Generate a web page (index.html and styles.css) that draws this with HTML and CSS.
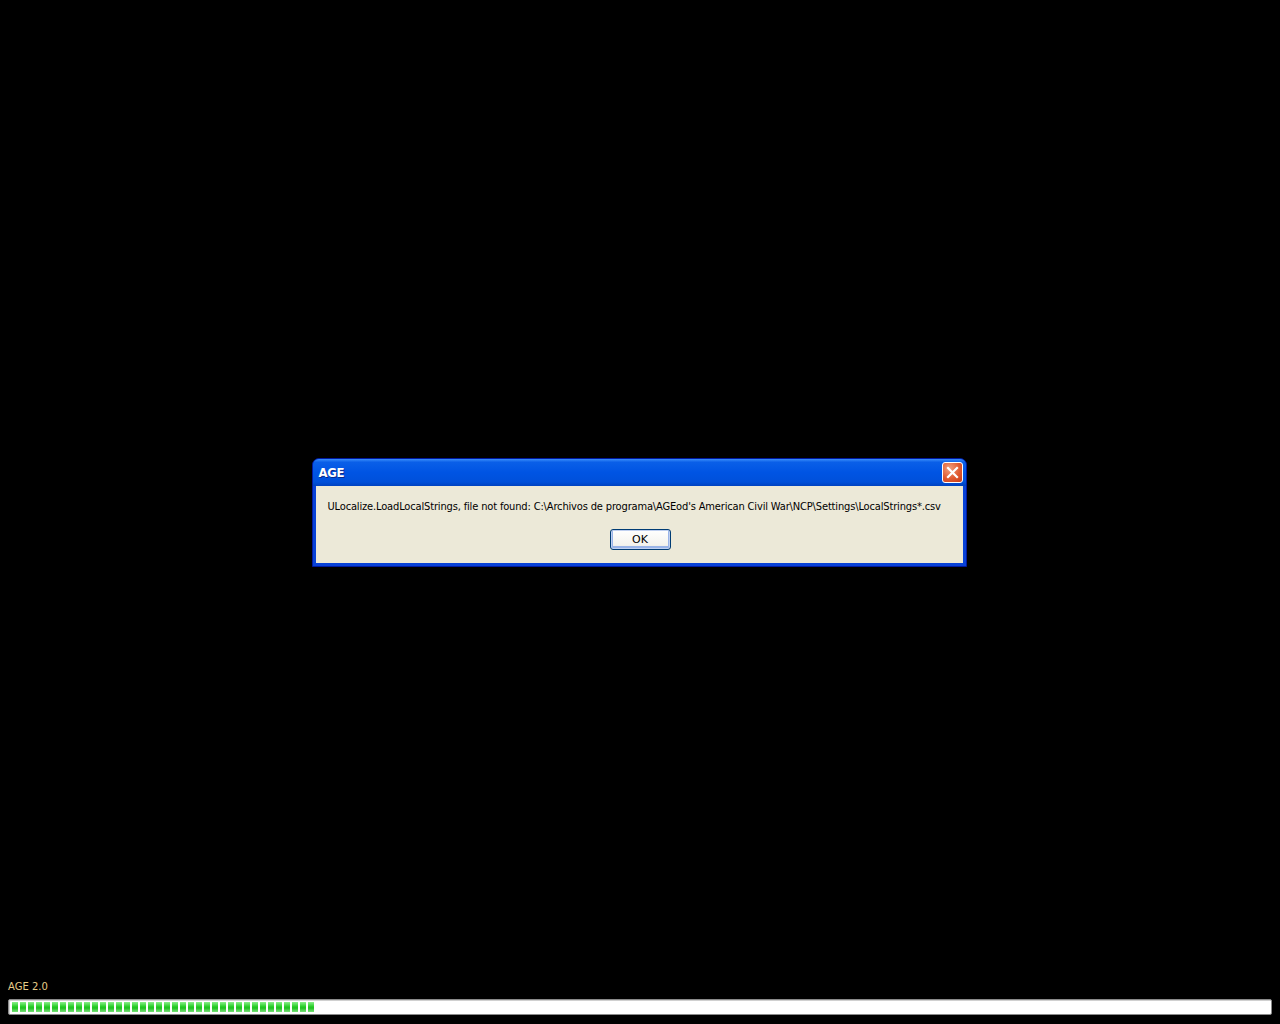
FILE: index.html
```html
<!DOCTYPE html>
<html>
<head>
<meta charset="utf-8">
<link rel="stylesheet" href="styles.css">
</head>
<body>
<div class="screen">
  <div class="stage">
    <div class="dialog">
      <div class="titlebar">
        <span class="title">AGE</span>
        <span class="close">
          <svg width="13" height="13" viewBox="0 0 13 13"><path d="M2 2 L11 11 M11 2 L2 11" stroke="#fff" stroke-width="2.2" stroke-linecap="square"/></svg>
        </span>
      </div>
      <div class="body">
        <p class="message">ULocalize.LoadLocalStrings, file not found: C:\Archivos de programa\AGEod's American Civil War\NCP\Settings\LocalStrings*.csv</p>
        <div class="actions"><button class="btn">OK</button></div>
      </div>
    </div>
  </div>
  <div class="status">
    <div class="version">AGE 2.0</div>
    <div class="progress" id="progress"></div>
  </div>
</div>
<script>
  var p = document.getElementById('progress');
  for (var i = 0; i < 38; i++) { var b = document.createElement('span'); b.className = 'block'; p.appendChild(b); }
</script>
</body>
</html>
```

FILE: styles.css
```css
html, body { margin: 0; padding: 0; background: #000; }
.screen { width: 1280px; height: 1024px; display: flex; flex-direction: column; }
.stage { flex: 1; display: flex; justify-content: center; align-items: flex-start; padding-top: 458px; }
.dialog {
  width: 655px; box-sizing: border-box; margin-left: -2px;
  background: #0842d8; border-radius: 7px 7px 0 0;
  padding: 0 3px 3px 3px;
  border: 1px solid #0019a0;
}
.titlebar {
  height: 27px; display: flex; align-items: center; justify-content: space-between;
  background: linear-gradient(#3a8cfa 0%, #0a5fe8 12%, #0054e3 50%, #0050da 85%, #0042c0 100%);
  margin: 0 -3px; padding: 0 3px 0 6px; border-radius: 6px 6px 0 0;
}
.title { font-family: "DejaVu Sans Condensed", "DejaVu Sans", sans-serif; font-weight: bold; font-size: 13px; color: #fff; letter-spacing: -0.3px; text-shadow: 1px 1px 0 #0a2a8a; }
.close {
  width: 21px; height: 21px; box-sizing: border-box; border: 1px solid #fff; border-radius: 3px;
  background: radial-gradient(circle at 35% 30%, #f0a080, #e05a30 55%, #c83a18);
  display: flex; align-items: center; justify-content: center;
}
.body { background: #ece9d8; padding: 14px 12px 13px 12px; }
.message { margin: 0; font-family: "DejaVu Sans Condensed", "DejaVu Sans", sans-serif; font-size: 11px; color: #000; white-space: nowrap; letter-spacing: -0.15px; }
.actions { display: flex; justify-content: center; margin-top: 16px; padding-left: 2px; }
.btn {
  width: 61px; height: 21px; box-sizing: border-box; font-family: "DejaVu Sans", sans-serif; font-size: 11px; color: #000;
  background: linear-gradient(#fff, #f4f3ee 80%, #d8d4c8);
  border: 1px solid #003c74; border-radius: 3px;
  box-shadow: inset 0 0 0 1px #c0d0f0, inset 0 -1px 0 2px #9ab4e8;
  padding: 0;
}
.status { padding: 0 8px 9px 8px; }
.version { font-family: "DejaVu Sans", sans-serif; font-size: 10px; color: #e6cc88; margin-bottom: 7px; }
.progress {
  height: 16px; box-sizing: border-box; background: #fff; border: 1px solid #8a8a8a; border-radius: 2px;
  display: flex; gap: 2px; padding: 2px 3px; box-shadow: inset 1px 1px 0 #d0d0d0;
}
.block { width: 6px; height: 10px; background: linear-gradient(#8aef8a, #2bcf2b 45%, #20c020 60%, #7ae27a); }
```
